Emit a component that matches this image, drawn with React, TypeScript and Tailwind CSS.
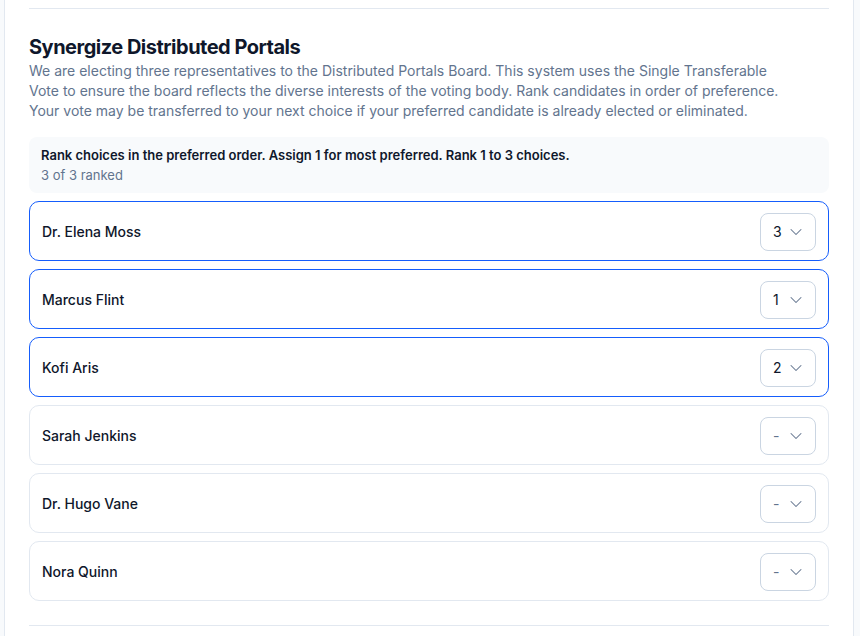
import { ChevronDown } from 'lucide-react';

interface Candidate {
  name: string;
  rank: number | null;
}

const candidates: Candidate[] = [
  { name: 'Dr. Elena Moss', rank: 3 },
  { name: 'Marcus Flint', rank: 1 },
  { name: 'Kofi Aris', rank: 2 },
  { name: 'Sarah Jenkins', rank: null },
  { name: 'Dr. Hugo Vane', rank: null },
  { name: 'Nora Quinn', rank: null },
];

function RankSelect({ rank }: { rank: number | null }) {
  return (
    <div className="flex h-[38px] w-[56px] items-center justify-between rounded-lg border border-slate-300 bg-white pl-3 pr-[9px]">
      <span className={rank ? 'text-sm text-slate-900' : 'text-sm text-slate-500'}>{rank ?? '-'}</span>
      <ChevronDown size={20} strokeWidth={1.25} className="text-slate-500" />
    </div>
  );
}

export default function App() {
  const ranked = candidates.filter((c) => c.rank !== null).length;

  return (
    <div className="min-h-[636px] bg-slate-50 pl-1" style={{ fontFamily: 'Inter, "Noto Sans", sans-serif' }}>
      <div className="min-h-[636px] w-[850px] border-x border-slate-200 bg-white px-6">
        <div className="h-[9px] border-b border-slate-200" />

        <div className="border-b border-slate-200 pb-6 pt-6">
          <h2 className="text-xl font-bold leading-7 tracking-tight text-slate-900">Synergize Distributed Portals</h2>
          <p className="max-w-3xl text-sm leading-5 text-slate-500">
            We are electing three representatives to the Distributed Portals Board. This system uses the Single Transferable
            Vote to ensure the board reflects the diverse interests of the voting body. Rank candidates in order of preference.
            Your vote may be transferred to your next choice if your preferred candidate is already elected or eliminated.
          </p>

          <div className="mt-4 rounded-lg bg-slate-50 px-3 py-2">
            <p className="text-[13px] font-semibold leading-5 text-slate-900">
              Rank choices in the preferred order. Assign 1 for most preferred. Rank 1 to 3 choices.
            </p>
            <p className="text-[13px] leading-5 text-slate-500">{ranked} of 3 ranked</p>
          </div>

          <div className="mt-2 flex flex-col gap-2">
            {candidates.map((c) => (
              <div
                key={c.name}
                className={
                  c.rank
                    ? 'flex h-[60px] items-center justify-between rounded-[10px] border border-blue-600 bg-white pl-3 pr-3 pt-px'
                    : 'flex h-[60px] items-center justify-between rounded-[10px] border border-slate-200 bg-white pl-3 pr-3 pt-px'
                }
              >
                <span className="text-sm font-medium text-slate-900">{c.name}</span>
                <RankSelect rank={c.rank} />
              </div>
            ))}
          </div>
        </div>
      </div>
    </div>
  );
}
